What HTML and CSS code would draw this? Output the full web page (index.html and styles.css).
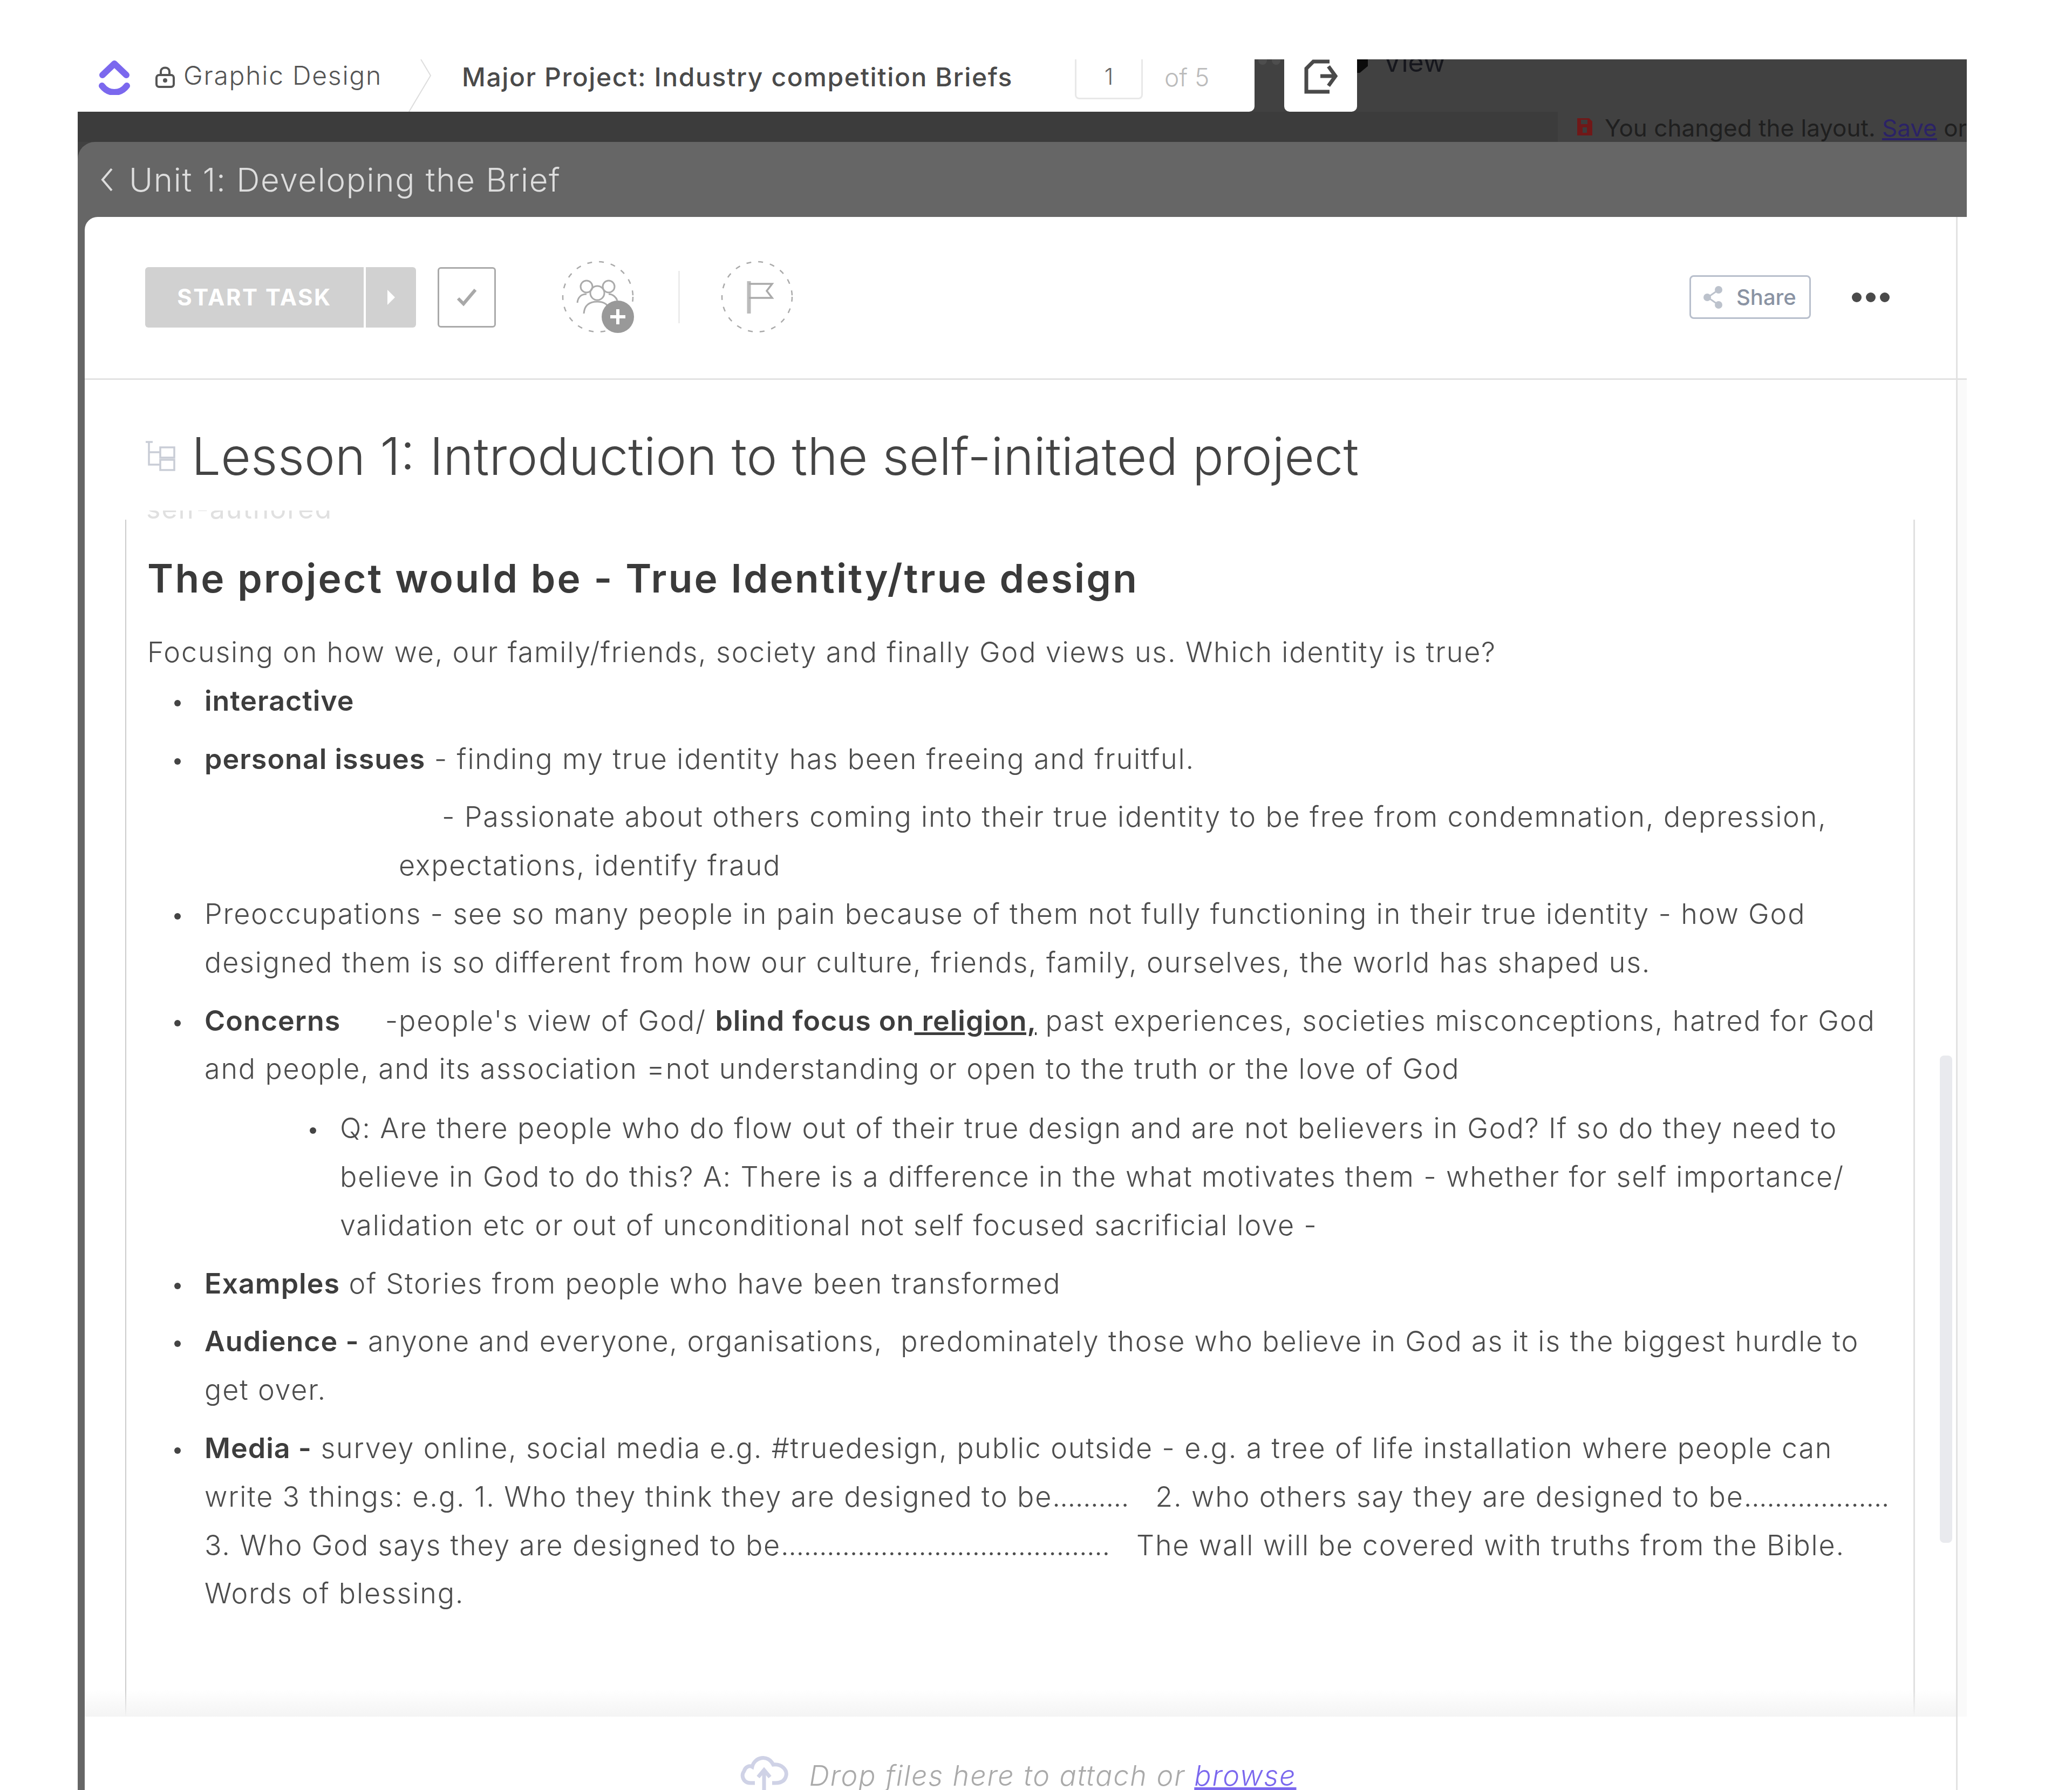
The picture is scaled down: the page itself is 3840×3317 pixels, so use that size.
FILE: index.html
```html
<!DOCTYPE html>
<html lang="en">
<head>
    <meta charset="UTF-8">
    <title>Lesson 1: Introduction to the self-initiated project</title>
    <link rel="stylesheet" href="styles.css">
</head>
<body>
    <div class="frame">
        <div class="topbar">
            <div class="tabs">
                <div class="crumbs">
                    <svg class="logo" width="58" height="66" viewBox="0 0 58 66"><path d="M7 29 L29 8 L51 29" fill="none" stroke="#7b68ee" stroke-width="12" stroke-linecap="round" stroke-linejoin="round"/><path d="M6 49 C18 65 40 65 52 49" fill="none" stroke="#7b68ee" stroke-width="12" stroke-linecap="round"/></svg>
                    <svg class="lock" width="38" height="40" viewBox="0 0 38 40"><rect x="3" y="16" width="32" height="22" rx="5" fill="none" stroke="#555" stroke-width="4"/><path d="M11 16 V10 C11 0 27 0 27 10 V16" fill="none" stroke="#555" stroke-width="4"/><circle cx="19" cy="26" r="4" fill="#555"/></svg>
                    <span class="space-name">Graphic Design</span>
                    <svg class="crumb-sep" width="42" height="97" viewBox="0 0 42 97"><path d="M23 0 L41 30 L1 97" fill="none" stroke="#ddd" stroke-width="2"/></svg>
                    <span class="doc-name">Major Project: Industry competition Briefs</span>
                    <span class="page-box">1</span>
                    <span class="page-of">of 5</span>
                </div>
                <div class="dots"><i></i><i></i></div>
                <div class="export">
                    <svg width="62" height="64" viewBox="0 0 62 64"><path d="M47 4 H17 L4 17 V60 H47" fill="none" stroke="#4a4a4a" stroke-width="7"/><path d="M30 31 H56" fill="none" stroke="#4a4a4a" stroke-width="7"/><path d="M45 13 L58 31 L45 49" fill="none" stroke="#4a4a4a" stroke-width="7"/></svg>
                </div>
                <i class="caret"></i>
                <span class="view">View</span>
            </div>
            <div class="notice-row">
                <div class="notice-gap"></div>
                <svg class="save-icon" width="34" height="38" viewBox="0 0 34 38"><path d="M3 3 H25 L31 9 V35 H3 Z" fill="#701818"/><rect x="10" y="6" width="12" height="8" fill="#3c3c3c"/><rect x="13" y="20" width="8" height="10" fill="#3c3c3c"/></svg>
                <span class="notice">You changed the layout. <a href="#">Save</a> or discard</span>
            </div>
        </div>

        <div class="panel">
            <div class="back">
                <svg width="22" height="44" viewBox="0 0 22 44"><path d="M20 2 L3 22 L20 42" fill="none" stroke="#ddd" stroke-width="4"/></svg>
                <span>Unit 1: Developing the Brief</span>
            </div>
            <div class="card">
                <div class="toolbar">
                    <div class="lane toolbar-lane">
                        <div class="start-btn">START TASK</div>
                        <div class="start-arrow"><i></i></div>
                        <div class="check-btn">
                            <svg width="40" height="36" viewBox="0 0 40 36"><path d="M4 20 L14 30 L36 4" fill="none" stroke="#a8a8a8" stroke-width="6"/></svg>
                        </div>
                        <svg class="assign" width="136" height="136" viewBox="0 0 136 136">
                            <circle cx="67" cy="67" r="65" fill="none" stroke="#aaa" stroke-width="2.5" stroke-dasharray="9 13"/>
                            <g fill="none" stroke="#aaa" stroke-width="3">
                                <circle cx="46" cy="48" r="11"/>
                                <circle cx="87" cy="48" r="11"/>
                                <circle cx="66" cy="60" r="13"/>
                                <path d="M29 78 C30 68 36 62 46 62"/>
                                <path d="M41 98 C42 84 50 76 66 76 C76 76 84 80 88 88"/>
                                <path d="M87 62 C95 62 101 68 103 74"/>
                            </g>
                            <circle cx="104" cy="104" r="30" fill="#999"/>
                            <path d="M104 90 V118 M90 104 H118" stroke="#fff" stroke-width="6"/>
                        </svg>
                        <div class="tool-sep"></div>
                        <svg class="priority" width="136" height="136" viewBox="0 0 136 136">
                            <circle cx="68" cy="67" r="65" fill="none" stroke="#aaa" stroke-width="2.5" stroke-dasharray="9 13"/>
                            <path d="M53 38 V98" stroke="#bbb" stroke-width="7" fill="none"/>
                            <path d="M53 43 H96 L86 56 L96 69 H53" stroke="#aaa" stroke-width="3.5" fill="none"/>
                        </svg>
                        <div class="share-btn">
                            <svg width="38" height="44" viewBox="0 0 38 44"><path d="M29 8 L9 22 L29 36" fill="none" stroke="#bcc2cc" stroke-width="3"/><circle cx="29" cy="8" r="7" fill="#bcc2cc"/><circle cx="8" cy="22" r="7" fill="#bcc2cc"/><circle cx="29" cy="36" r="7" fill="#bcc2cc"/></svg>
                            <span>Share</span>
                        </div>
                        <div class="more"><i></i><i></i><i></i></div>
                    </div>
                </div>

                <div class="body">
                    <div class="lane body-lane">
                        <div class="title-row">
                            <svg width="56" height="56" viewBox="0 0 56 56"><g fill="none" stroke="#c9cdd6" stroke-width="3.5"><path d="M1 2 H14 M7 2 V44 H28 M7 21 H28"/><rect x="28" y="12" width="26" height="19"/><rect x="28" y="35" width="26" height="19"/></g></svg>
                            <h1>Lesson 1: Introduction to the self-initiated project</h1>
                        </div>
                        <div class="clipped"><span>self-authored</span></div>
                        <div class="content">
                            <div class="scrollbar"></div>
                            <h2>The project would be - True Identity/true design</h2>
                            <p>Focusing on how we, our family/friends, society and finally God views us. Which identity is true?</p>
                            <ul>
                                <li><b>interactive</b></li>
                                <li><b>personal issues</b> - finding my true identity has been freeing and fruitful.</li>
                            </ul>
                            <p class="indented">- Passionate about others coming into their true identity to be free from condemnation, depression,<br>expectations, identify fraud</p>
                            <ul>
                                <li>Preoccupations - see so many people in pain because of them not fully functioning in their true identity - how God<br>designed them is so different from how our culture, friends, family, ourselves, the world has shaped us.</li>
                                <li><b>Concerns</b> &nbsp; &nbsp;&nbsp;-people's view of God/ <b>blind focus on<u> religion,</u></b> past experiences, societies misconceptions, hatred for God<br>and people, and its association =not understanding or open to the truth or the love of God
                                    <ul class="nested">
                                        <li>Q: Are there people who do flow out of their true design and are not believers in God? If so do they need to<br>believe in God to do this? A: There is a difference in the what motivates them - whether for self importance/<br>validation etc or out of unconditional not self focused sacrificial love -</li>
                                    </ul>
                                </li>
                                <li><b>Examples</b> of Stories from people who have been transformed</li>
                                <li><b>Audience -</b> anyone and everyone, organisations, &nbsp;predominately those who believe in God as it is the biggest hurdle to<br>get over.</li>
                                <li><b>Media -</b> survey online, social media e.g. #truedesign, public outside - e.g. a tree of life installation where people can<br>write 3 things: e.g. 1. Who they think they are designed to be<span class="leader">..........</span> &nbsp; 2. who others say they are designed to be<span class="leader">...................</span><br>3. Who God says they are designed to be<span class="leader">...........................................</span> &nbsp; The wall will be covered with truths from the Bible.<br>Words of blessing.</li>
                            </ul>
                        </div>
                    </div>
                </div>

                <div class="footer">
                    <div class="lane footer-lane">
                        <svg class="cloud" width="90" height="70" viewBox="0 0 90 70"><path d="M28 56 H20 C6 56 2 42 8 34 C10 26 18 23 23 26 C27 8 52 2 62 22 C78 20 88 32 86 42 C84 52 76 56 66 56 H60" fill="none" stroke="#cfd2e6" stroke-width="7"/><path d="M45 70 V34 M34 45 L45 32 L56 45" fill="none" stroke="#cfd2e6" stroke-width="7"/></svg>
                        <span class="drop">Drop files here to attach or <a href="#">browse</a></span>
                    </div>
                </div>
            </div>
        </div>
    </div>
</body>
</html>
```

FILE: styles.css
```css
html, body {
    margin: 0;
    height: 3317px;
    overflow: hidden;
    background-color: #fff;
}
body {
    font-family: 'Inter', 'Liberation Sans', sans-serif;
    color: #555;
}
.frame {
    margin: 110px 0 0 144px;
    width: 3501px;
    height: 3207px;
    background-color: #414141;
}

/* top strip */
.topbar {
    height: 153px;
    background-color: #414141;
}
.tabs {
    display: flex;
    height: 97px;
    overflow: hidden;
    align-items: flex-start;
}
.crumbs {
    display: flex;
    align-items: center;
    box-sizing: border-box;
    width: 2181px;
    height: 97px;
    padding: 0 0 32px 39px;
    background-color: #fff;
    border-bottom-right-radius: 10px;
}
.lock { margin-left: 46px; }
.space-name {
    margin: 0 0 7px 15px;
    width: 417px;
    font-size: 48px;
    font-weight: 300;
    letter-spacing: 1.75px;
    color: #555;
    white-space: nowrap;
}
.crumb-sep {
    align-self: flex-start;
    margin-bottom: -32px;
}
.doc-name {
    margin-left: 57px;
    width: 1136px;
    font-size: 48px;
    font-weight: 500;
    letter-spacing: 1.6px;
    color: #4a4a4a;
    white-space: nowrap;
}
.page-box {
    align-self: flex-start;
    box-sizing: border-box;
    width: 126px;
    height: 74px;
    border: 3px solid #e8e8e8;
    border-top: none;
    border-radius: 0 0 8px 8px;
    font-size: 42px;
    font-weight: 300;
    line-height: 64px;
    text-align: center;
    color: #666;
}
.page-of {
    margin-left: 40px;
    font-size: 46px;
    font-weight: 300;
    color: #bbb;
}
.dots {
    display: flex;
    gap: 9px;
    width: 55px;
    justify-content: center;
    margin-top: -6px;
}
.dots i {
    width: 16px;
    height: 16px;
    border-radius: 50%;
    background-color: #4e4e4e;
}
.export {
    display: flex;
    justify-content: center;
    width: 135px;
    height: 97px;
    background-color: #fff;
    border-radius: 0 0 10px 10px;
}
.caret {
    width: 20px;
    height: 25px;
    background-color: #0b0b0b;
    clip-path: polygon(0 0, 100% 0, 100% 50%, 25% 100%, 0 100%);
}
.view {
    margin: -20px 0 0 28px;
    font-size: 50px;
    line-height: 50px;
    color: #16171d;
}
.notice-row {
    display: flex;
    align-items: center;
    height: 56px;
    overflow: hidden;
}
.notice-gap {
    flex-shrink: 0;
    width: 2743px;
    height: 56px;
    background-color: #3c3c3c;
}
.save-icon { margin-left: 33px; flex-shrink: 0; }
.notice {
    margin: 4px 0 0 20px;
    font-size: 44px;
    white-space: nowrap;
    color: #1f1f1f;
}
.notice a { color: #2b2266; }

/* unit header + card */
.panel {
    height: 3054px;
    background-color: #666;
    border-top-left-radius: 32px;
}
.back {
    display: flex;
    align-items: center;
    height: 139px;
    padding-left: 43px;
    gap: 30px;
    box-sizing: border-box;
    font-size: 60px;
    font-weight: 300;
    letter-spacing: 1.7px;
    color: #ddd;
}
.card {
    margin-left: 13px;
    height: 2915px;
    background-color: #fff;
    border-top-left-radius: 24px;
}
.lane {
    box-sizing: border-box;
    width: 3471px;
    border-right: 3px solid #e2e2e2;
    background-color: #fff;
}

/* toolbar */
.toolbar {
    height: 299px;
    border-bottom: 3px solid #e2e2e2;
}
.toolbar-lane {
    display: flex;
    align-items: center;
    height: 299px;
    padding: 0 0 2px 112px;
    background-color: transparent;
}
.start-btn {
    width: 405px;
    height: 112px;
    border-radius: 6px 0 0 6px;
    background-color: #d1d1d1;
    color: #fff;
    font-size: 42px;
    font-weight: 700;
    line-height: 112px;
    text-align: center;
    letter-spacing: 2.5px;
}
.start-arrow {
    display: flex;
    align-items: center;
    justify-content: center;
    width: 93px;
    height: 112px;
    margin-left: 4px;
    border-radius: 0 6px 6px 0;
    background-color: #d1d1d1;
}
.start-arrow i {
    border-left: 14px solid #fff;
    border-top: 14px solid transparent;
    border-bottom: 14px solid transparent;
}
.check-btn {
    display: flex;
    align-items: center;
    justify-content: center;
    box-sizing: border-box;
    width: 108px;
    height: 112px;
    margin-left: 40px;
    border: 3px solid #aaa;
    border-radius: 6px;
}
.assign { margin-left: 122px; }
.tool-sep {
    width: 3px;
    height: 97px;
    margin-left: 80px;
    background-color: #ececec;
}
.priority { margin-left: 75px; }
.share-btn {
    display: flex;
    align-items: center;
    box-sizing: border-box;
    width: 225px;
    height: 81px;
    margin-left: 1660px;
    padding-left: 22px;
    gap: 24px;
    border: 3px solid #b8bfcc;
    border-radius: 8px;
    font-size: 40px;
    font-weight: 500;
    color: #8a93a3;
}
.more {
    display: flex;
    gap: 8px;
    margin-left: 76px;
}
.more i {
    width: 18px;
    height: 18px;
    border-radius: 50%;
    background-color: #4a4a4a;
}

/* body */
.body {
    height: 2477px;
    background-color: #fafafa;
}
.body-lane {
    position: relative;
    height: 2477px;
    padding-top: 42px;
    overflow: hidden;
}
.body-lane::after {
    content: "";
    position: absolute;
    left: 0;
    right: 0;
    bottom: 0;
    height: 50px;
    background: linear-gradient(rgba(244,244,244,0), #f4f4f4);
}
.title-row {
    box-sizing: border-box;
    display: flex;
    align-items: center;
    height: 200px;
    padding: 0 0 2px 112px;
    gap: 30px;
}
h1 {
    margin: 0;
    font-size: 96px;
    font-weight: 300;
    color: #444;
    white-space: nowrap;
}
.clipped {
    height: 17px;
    padding-left: 114px;
    overflow: hidden;
    font-size: 50px;
    letter-spacing: 2px;
    color: #e0e0e0;
}
.clipped span {
    display: block;
    margin-top: -33px;
}
.content {
    box-sizing: border-box;
    position: relative;
    width: 3317px;
    height: 2218px;
    margin-left: 75px;
    padding: 59px 0 0 39px;
    border-left: 2px solid #ccc;
    border-right: 3px solid #e0e0e0;
    white-space: nowrap;
    font-size: 52px;
    font-weight: 300;
    letter-spacing: 1.83px;
    line-height: 89.8px;
    color: #4d4d4d;
}
.scrollbar {
    position: absolute;
    top: 993px;
    right: -72px;
    width: 23px;
    height: 903px;
    border-radius: 8px;
    background-color: #e9eaee;
}
h2 {
    margin: 0 0 42px;
    font-size: 73px;
    font-weight: 580;
    letter-spacing: 3.2px;
    line-height: 100px;
    color: #3a3a3a;
}
p { margin: 0; }
b { font-weight: 600; letter-spacing: 1px; color: #3d3d3d; }
.leader { letter-spacing: -0.5px; }
ul {
    margin: 0;
    padding: 0 0 0 106px;
    list-style: none;
}
li { margin-bottom: 18px; }
li::before {
    content: "";
    display: inline-block;
    width: 12px;
    height: 12px;
    margin: 0 44px 8px -56px;
    border-radius: 50%;
    background-color: #444;
}
.indented {
    margin-left: 466px;
    text-indent: 80px;
}
.nested {
    padding-left: 251px;
    margin-top: 20px;
}
.nested li { margin-bottom: 0; }

/* footer */
.footer {
    height: 140px;
}
.footer-lane {
    display: flex;
    justify-content: center;
    align-items: flex-start;
    height: 140px;
    padding: 73px 8px 0 0;
    gap: 38px;
}
.cloud { margin-top: -6px; }
.drop {
    font-size: 52px;
    font-weight: 300;
    font-style: italic;
    letter-spacing: 1.9px;
    line-height: 74px;
    color: #aaa;
}
.drop a { color: #7b68ee; }
```
